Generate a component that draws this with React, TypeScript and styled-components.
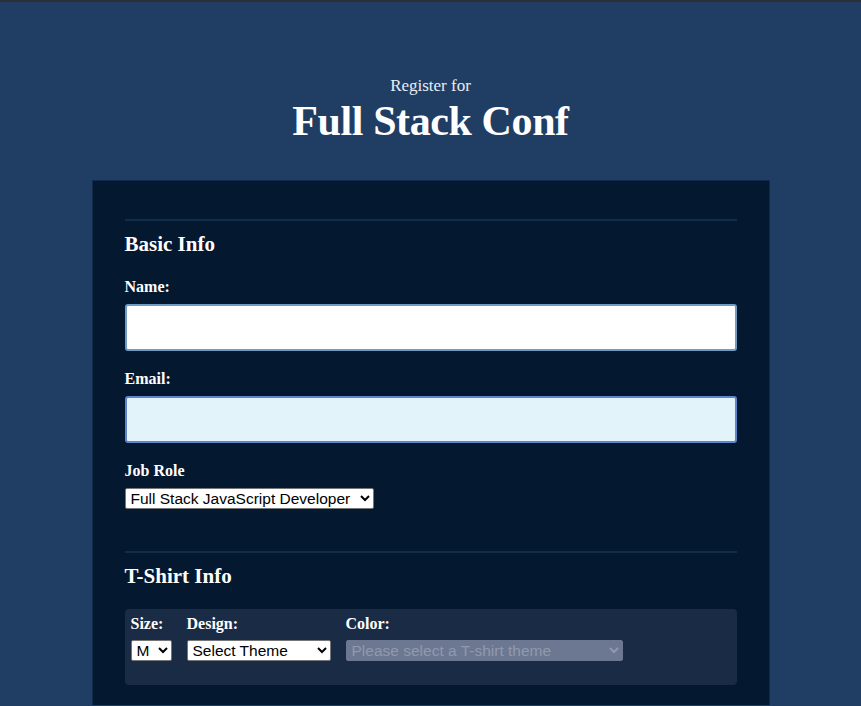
import React from "react";
import styled, { createGlobalStyle } from "styled-components";

const Global = createGlobalStyle`
  html, body { margin: 0; padding: 0; }
  body {
    background: #203e63;
    font-family: "Liberation Serif", "DejaVu Serif", serif;
    color: #fff;
    border-top: 2px solid #2b2e33;
    box-sizing: border-box;
  }
`;

const Page = styled.div`
  display: flex;
  flex-direction: column;
  align-items: center;
`;

const Header = styled.header`
  display: flex;
  flex-direction: column;
  align-items: center;
  padding-top: 74px;
  margin-bottom: 34px;
`;

const Kicker = styled.span`
  font-size: 17px;
  line-height: 20px;
  color: #e8eef6;
`;

const Title = styled.h1`
  margin: 0;
  font-size: 42px;
  line-height: 50px;
  font-weight: 700;
  letter-spacing: -0.4px;
  color: #fff;
`;

const Card = styled.form`
  width: 678px;
  box-sizing: border-box;
  background: #041830;
  border: 1px solid #0f2a4a;
  border-bottom: none;
  padding: 38px 32px 20px;
`;

const Section = styled.fieldset`
  border: none;
  border-top: 2px solid #132c48;
  margin: 0;
  padding: 9px 0 0;
  & + & { margin-top: 42px; }
`;

const Legend = styled.h2`
  margin: 0 0 19px;
  font-size: 21px;
  line-height: 28px;
  font-weight: 700;
`;

const Label = styled.label`
  display: block;
  font-size: 16px;
  line-height: 20px;
  font-weight: 700;
  margin-bottom: 7px;
`;

const TextInput = styled.input<{ $focus?: boolean }>`
  display: block;
  width: 100%;
  height: 47px;
  box-sizing: border-box;
  border: 2px solid ${(p) => (p.$focus ? "#5d86cc" : "#6f9cc2")};
  border-radius: 3px;
  background: ${(p) => (p.$focus ? "#e2f3f9" : "#ffffff")};
  margin-bottom: 18px;
  outline: none;
`;

const Select = styled.select<{ $w: number; $disabled?: boolean }>`
  font-family: "Liberation Sans", Arial, sans-serif;
  font-size: 15.5px;
  height: 21px;
  width: ${(p) => p.$w}px;
  padding: 0 1px;
  border: 1px solid #767676;
  border-radius: 2px;
  background: ${(p) => (p.$disabled ? "#6c7891" : "#fff")};
  color: ${(p) => (p.$disabled ? "#9099ad" : "#000")};
  border-color: ${(p) => (p.$disabled ? "#6c7891" : "#767676")};
  opacity: 1;
`;

const ShirtBox = styled.div`
  background: #1a2b46;
  border-radius: 4px;
  padding: 5px 6px 24px;
  display: flex;
  gap: 15px;
`;

const Field = styled.div`
  display: flex;
  flex-direction: column;
`;

const SmallLabel = styled.label`
  font-size: 16px;
  line-height: 20px;
  font-weight: 700;
  margin-bottom: 6px;
`;

export default function App() {
  return (
    <>
      <Global />
      <Page>
        <Header>
          <Kicker>Register for</Kicker>
          <Title>Full Stack Conf</Title>
        </Header>
        <Card>
          <Section>
            <Legend>Basic Info</Legend>
            <Label htmlFor="name">Name:</Label>
            <TextInput id="name" type="text" />
            <Label htmlFor="email">Email:</Label>
            <TextInput id="email" type="email" $focus />
            <Label htmlFor="title">Job Role</Label>
            <Select id="title" $w={249} defaultValue="fs">
              <option value="fs">Full Stack JavaScript Developer</option>
            </Select>
          </Section>
          <Section>
            <Legend>T-Shirt Info</Legend>
            <ShirtBox>
              <Field>
                <SmallLabel>Size:</SmallLabel>
                <Select $w={41} defaultValue="m">
                  <option value="m">M</option>
                </Select>
              </Field>
              <Field>
                <SmallLabel>Design:</SmallLabel>
                <Select $w={144} defaultValue="x">
                  <option value="x">Select Theme</option>
                </Select>
              </Field>
              <Field>
                <SmallLabel>Color:</SmallLabel>
                <Select $w={277} $disabled disabled defaultValue="x">
                  <option value="x">Please select a T-shirt theme</option>
                </Select>
              </Field>
            </ShirtBox>
          </Section>
        </Card>
      </Page>
    </>
  );
}
